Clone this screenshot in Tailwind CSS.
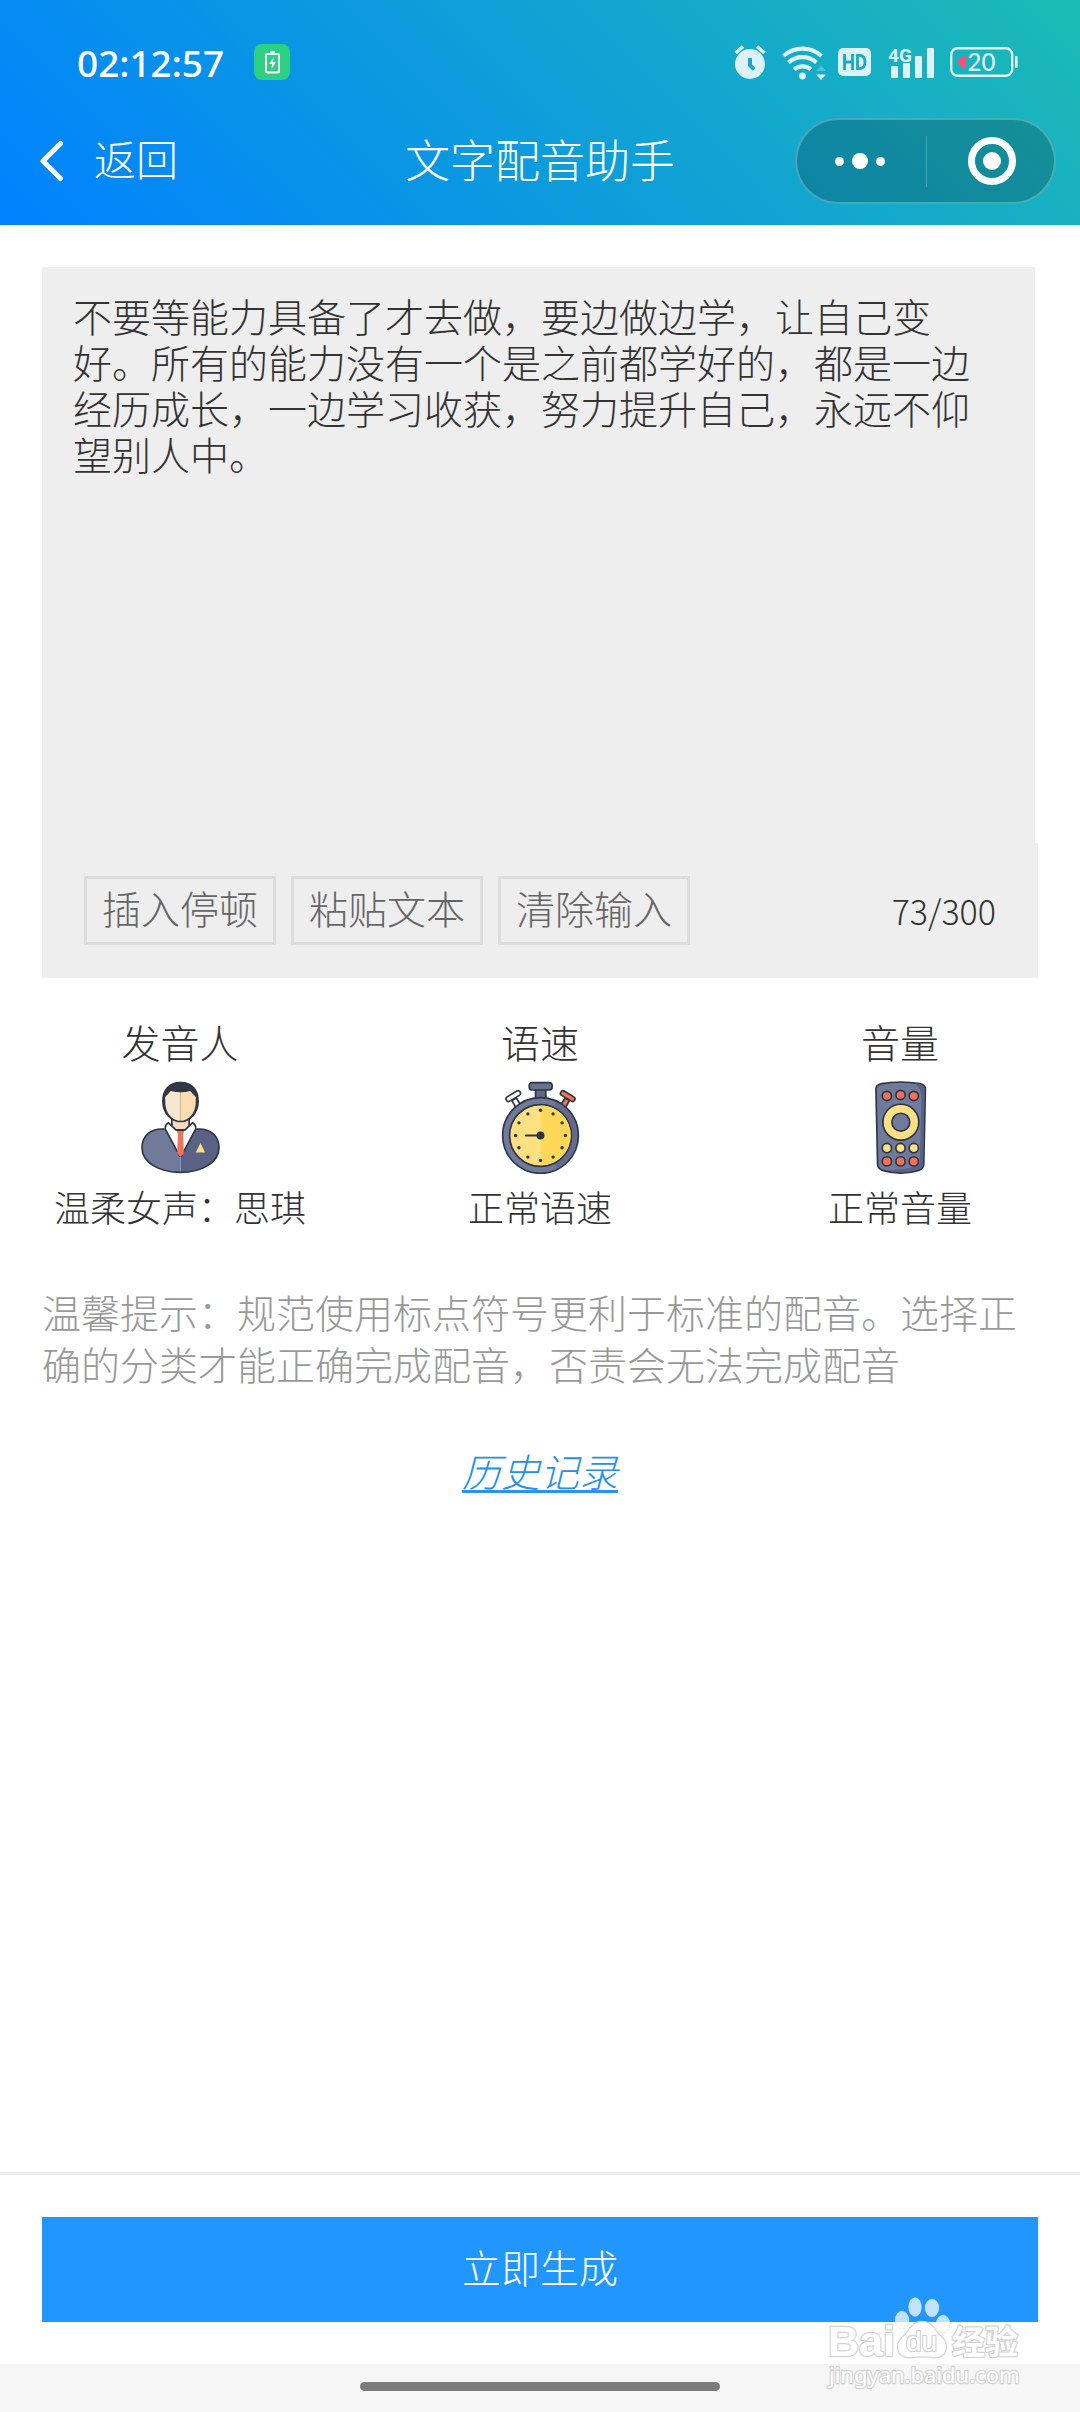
<!DOCTYPE html>
<html lang="zh-CN">
<head>
<meta charset="utf-8">
<meta name="viewport" content="width=device-width, initial-scale=1">
<title>文字配音助手</title>
<script src="https://cdn.jsdelivr.net/npm/@tailwindcss/browser@4"></script>
</head>
<body class="flex min-h-screen flex-col bg-white font-['Noto_Sans_CJK_SC',sans-serif] text-[39px] font-light text-[#333]">

<header class="bg-linear-[45deg,#0081ff,#1cbbb4] pb-[19px] text-white">
  <!-- Status bar -->
  <div class="flex h-[116px] items-center justify-between pt-2 pr-[62px] pl-[77px]">
    <div class="flex items-center gap-[30px]">
      <time class="font-['Noto_Sans',sans-serif] text-[37px] leading-none font-medium">02:12:57</time>
      <span class="flex size-9 items-center justify-center rounded-lg bg-[#2bd080]">
        <svg class="h-[23px] w-[15px]" viewBox="0 0 15 23" fill="none" aria-hidden="true">
          <path d="M5 0h5v3H5z" fill="#fff"/>
          <rect x="1" y="3" width="13" height="18.500" rx="1.500" stroke="#fff" stroke-width="2"/>
          <path d="M8.500 6.500 4.200 13h2.800l-.5 5 4.300-6.800H8z" fill="#fff"/>
        </svg>
      </span>
    </div>
    <div class="flex items-center text-white/85">
      <svg class="mr-4 h-[34px] w-8" viewBox="0 0 32 34" fill="currentColor" aria-hidden="true">
        <path fill-rule="evenodd" d="M16 4a15 15 0 1 0 0 30 15 15 0 0 0 0-30Zm-2 9h4v6.500l3.500 3.500-2.800 2.800L14 21Z"/>
        <path d="M1.500 8 9 1.500M30.500 8 23 1.500" stroke="currentColor" stroke-width="3.600"/>
      </svg>
      <svg class="mr-3 h-[35px] w-11" viewBox="0 0 44 35" fill="none" stroke="currentColor" stroke-width="4.200" aria-hidden="true">
        <path d="M1.500 11a28 28 0 0 1 38 0M6.500 17.500a21 21 0 0 1 28 0M12 24.500a13 13 0 0 1 17 0"/>
        <circle cx="20.500" cy="31" r="3.400" fill="currentColor" stroke="none"/>
        <path d="M39 20.500 44 26H34z" fill="currentColor" stroke="none" opacity=".3"/>
        <path d="M34 29.500h10L39 35z" fill="currentColor" stroke="none"/>
      </svg>
      <svg class="mr-[17px] h-7 w-[33px]" viewBox="0 0 33 28" aria-hidden="true">
        <rect width="33" height="28" rx="5" fill="currentColor"/>
        <path d="M6.500 6v16M14.500 6v16M6.500 14h8M19.500 7.300v13.400h2.500q5-.7 5-6.700t-5-6.700z" fill="none" stroke="#18a9c5" stroke-width="2.800"/>
      </svg>
      <svg class="mr-4 h-[41px] w-[46px]" viewBox="0 0 46 41" fill="currentColor" aria-label="4G">
        <text x="0" y="20" class="font-['Roboto',sans-serif] text-[19px] font-bold">4G</text>
        <rect x="3" y="24" width="7" height="12" rx="1"/>
        <rect x="15" y="21" width="7" height="15" rx="1"/>
        <rect x="27" y="14" width="7" height="22" rx="1"/>
        <rect x="39" y="6" width="7" height="30" rx="1"/>
      </svg>
      <svg class="h-[30px] w-[68px]" viewBox="0 0 68 30" fill="currentColor" aria-label="20%">
        <rect x="1.200" y="1.200" width="61" height="27.600" rx="6.500" fill="none" stroke="currentColor" stroke-width="2.400"/>
        <rect x="65" y="9" width="2.600" height="12" rx="1"/>
        <path d="M16 8.500v13q-5-1-9-6.500 4-5.500 9-6.500Z" fill="#fb4f75"/>
        <text x="17.500" y="24" class="font-['Lato',sans-serif] text-[24px] font-medium">20</text>
      </svg>
    </div>
  </div>

  <!-- Navigation bar -->
  <nav class="grid h-[90px] grid-cols-[1fr_auto_1fr] items-center px-6">
    <a href="#" class="flex items-center gap-[30px] pl-4 text-[42px] leading-none">
      <svg class="h-[42px] w-6" viewBox="0 0 24 42" fill="none" stroke="currentColor" stroke-width="5" stroke-linecap="round" stroke-linejoin="round" aria-hidden="true"><path d="M20.500 3.500 3 21l17.500 17.500"/></svg>
      <span class="pb-1.5">返回</span>
    </a>
    <h1 class="pb-1.5 text-[45px] leading-none">文字配音助手</h1>
    <div class="flex h-[86px] w-[261px] items-center justify-self-end rounded-full border-2 border-white/25 bg-black/20">
      <button type="button" aria-label="更多" class="flex h-full w-1/2 items-center justify-center gap-2 pr-0.5">
        <span class="size-[9px] rounded-full bg-white"></span>
        <span class="size-4 rounded-full bg-white"></span>
        <span class="size-[9px] rounded-full bg-white"></span>
      </button>
      <span class="h-[51px] w-px bg-white/25"></span>
      <button type="button" aria-label="关闭" class="flex h-full flex-1 items-center justify-center pl-1">
        <span class="flex size-12 items-center justify-center rounded-full border-7 border-white">
          <span class="size-[18px] rounded-full bg-white"></span>
        </span>
      </button>
    </div>
  </nav>
</header>

<main class="flex-1 px-[42px] pt-[42px]">
  <!-- Text entry -->
  <div class="pr-[3px]">
    <textarea aria-label="配音文本" maxlength="300" class="block h-[576px] w-full resize-none overflow-hidden bg-[#eee] px-[31px] pt-[25px] leading-[46px] outline-none">不要等能力具备了才去做，要边做边学，让自己变好。所有的能力没有一个是之前都学好的，都是一边经历成长，一边学习收获，努力提升自己，永远不仰望别人中。</textarea>
  </div>
  <div class="flex items-center gap-[15px] bg-[#eee] px-[42px] py-[33px]">
    <button type="button" class="h-[69px] border-3 border-[#ddd] px-[15px] pb-1.5 leading-none text-[#666]">插入停顿</button>
    <button type="button" class="h-[69px] border-3 border-[#ddd] px-[15px] pb-1.5 leading-none text-[#666]">粘贴文本</button>
    <button type="button" class="h-[69px] border-3 border-[#ddd] px-[15px] pb-1.5 leading-none text-[#666]">清除输入</button>
    <output class="ml-auto text-[34px] leading-none">73/300</output>
  </div>

  <!-- Voice settings -->
  <div class="-mx-[42px] grid grid-cols-3 pt-[43px]">
    <button type="button" class="flex flex-col items-center">
      <span class="leading-[40px]">发音人</span>
      <svg class="mt-[20px] mb-[12px] size-[93px]" viewBox="400 244 280 280" stroke="#2e3542" stroke-width="5" stroke-linejoin="round" aria-hidden="true">
        <path d="M540 390h42c46-8 74 20 74 55 0 45-52 74-116 74z" fill="#596185" stroke="none"/>
        <path d="M540 390h-42c-46-8-74 20-74 55 0 45 52 74 116 74z" fill="#707a9b" stroke="none"/>
        <path d="M492 389c-42-4-68 22-68 56 0 45 52 74 116 74s116-29 116-74c0-34-26-60-68-56" fill="none"/>
        <path d="M514 355h52v36h-52z" fill="#f5dcc0"/>
        <path d="M504 370c-8 3-10 10-10 18l43 81q3 4 6 0l43-81c0-8-2-15-10-18l-23 22h-26z" fill="#fff"/>
        <path d="M528 392h24l-4 12 2 58-10 10-10-10 2-58z" fill="#f3705a" stroke="none"/>
        <path d="M528 392h24" fill="none"/>
        <path d="M540 249c-37 0-53 25-53 56 0 35 24 61 53 61s53-26 53-61c0-31-16-56-53-56z" fill="#333745"/>
        <path d="M540 278q-15 0-29-4l-17 18v14c0 33 19 58 46 58z" fill="#f7e6d2" stroke="none"/>
        <path d="M540 278q15 0 29-4l17 18v14c0 33-19 58-46 58z" fill="#ffdcb0" stroke="none"/>
        <path d="m600 431 14 28h-28z" fill="#fbdc80" stroke="none"/>
      </svg>
      <span class="text-[36px] leading-[40px]">温柔女声：思琪</span>
    </button>
    <button type="button" class="flex flex-col items-center">
      <span class="leading-[40px]">语速</span>
      <svg class="mt-[20px] mb-[12px] size-[93px]" viewBox="280 244 280 280" stroke="#2e3542" stroke-width="5" stroke-linejoin="round" aria-hidden="true">
        <path d="m334 303 13-8 14 22-14 9z" fill="#fff"/>
        <rect x="314" y="282" width="48" height="15" rx="7" transform="rotate(-31 338 289.500)" fill="#fff"/>
        <path d="m507 303-13-8-14 22 14 9z" fill="#f3705a"/>
        <rect x="478" y="282" width="48" height="15" rx="7" transform="rotate(31 502 289.500)" fill="#f3705a"/>
        <path d="M405 268h31v30h-31z" fill="#5f688b"/>
        <rect x="386" y="249" width="69" height="22" rx="9" fill="#697294"/>
        <circle cx="420" cy="408" r="114" fill="#707a9b"/>
        <path d="M465 309a108 108 0 0 1 0 198z" fill="#626b8e" stroke="none"/>
        <circle cx="420" cy="408" r="93" fill="#fde083"/>
        <path d="M421 318a90 90 0 0 1 0 180z" fill="#ffd85a" stroke="none"/>
        <path d="M376 408h44" stroke-width="6" stroke-linecap="round"/>
        <g fill="#2e3542" stroke="none">
          <circle cx="420" cy="408" r="12"/>
          <circle cx="420" cy="332" r="5"/><circle cx="458" cy="343" r="5"/><circle cx="485" cy="370" r="5"/>
          <circle cx="495" cy="408" r="5"/><circle cx="485" cy="445" r="5"/><circle cx="458" cy="473" r="5"/>
          <circle cx="420" cy="483" r="5"/><circle cx="382" cy="473" r="5"/><circle cx="355" cy="445" r="5"/>
          <circle cx="345" cy="408" r="5"/><circle cx="355" cy="370" r="5"/><circle cx="382" cy="343" r="5"/>
        </g>
      </svg>
      <span class="text-[36px] leading-[40px]">正常语速</span>
    </button>
    <button type="button" class="flex flex-col items-center">
      <span class="leading-[40px]">音量</span>
      <svg class="mt-[20px] mb-[12px] size-[93px]" viewBox="220 246 280 280" stroke="#2e3542" stroke-width="5" stroke-linejoin="round" aria-hidden="true">
        <path d="M303 254q57-10 115 0 17 4 17 16l-5 227q-1 13-15 18-55 17-109 0-14-5-15-18l-5-227q0-12 17-16z" fill="#707a9b"/>
        <path d="M403 253q25 2 30 15l-5 229q-1 12-14 16-48 14-100 2 92-2 104-22l5-192q-1-34-20-48z" fill="#596185" stroke="none"/>
        <circle cx="361" cy="370" r="54" fill="#fde083"/>
        <circle cx="361" cy="370" r="27" fill="#707a9b"/>
        <g fill="#f3705a">
          <circle cx="319" cy="291" r="14"/><circle cx="360" cy="288" r="14"/><circle cx="400" cy="291" r="14"/>
          <circle cx="319" cy="488" r="14"/><circle cx="360" cy="488" r="14"/><circle cx="400" cy="488" r="14"/>
        </g>
        <g fill="#fde083">
          <circle cx="319" cy="448" r="14"/><circle cx="360" cy="448" r="14"/><circle cx="400" cy="448" r="14"/>
        </g>
      </svg>
      <span class="text-[36px] leading-[40px]">正常音量</span>
    </button>
  </div>

  <p class="mt-[59px] leading-[52px] text-[#999]">温馨提示：规范使用标点符号更利于标准的配音。选择正确的分类才能正确完成配音，否责会无法完成配音</p>

  <div class="mt-[63px] flex justify-center">
    <a href="#" class="border-b-3 border-[#2b93e8] pb-0.5 leading-[36px] text-[#2490e8] italic">历史记录</a>
  </div>
</main>

<footer class="relative">
  <div class="border-t-3 border-[#eee] p-[42px]">
    <button type="button" class="block h-[105px] w-full bg-[#2196ff] pb-1.5 leading-none text-white">立即生成</button>
  </div>
  <div class="flex h-12 justify-center bg-[#f6f6f6] pt-[18px]">
    <div class="h-[9px] w-1/3 rounded-full bg-[#7b7b7b]"></div>
  </div>

  <!-- Site watermark -->
  <svg class="pointer-events-none absolute right-[52px] bottom-[18px] h-[102px] w-[204px]" viewBox="0 0 204 102" fill="#fff" stroke="#d4d4d4" stroke-width="2.500" paint-order="stroke" stroke-linejoin="round" aria-label="Baidu 经验">
    <g fill-opacity=".72" stroke="#9cc4e8" stroke-opacity=".4" stroke-width="1">
      <ellipse cx="78" cy="28" rx="7" ry="9"/>
      <ellipse cx="91" cy="15" rx="6.500" ry="9.500"/>
      <ellipse cx="108" cy="16" rx="7" ry="9"/>
      <ellipse cx="119" cy="32" rx="7" ry="9"/>
    </g>
    <path d="M98 30c9 0 12 7 16 12 4 4 8 7 8 13 0 8-7 11-13 10-7-1-14-1-21 0-7 1-14-2-14-10 0-6 4-9 8-13 4-5 7-12 16-12Z"/>
    <text x="4" y="64" class="font-['Liberation_Sans',sans-serif] text-[43px] font-bold">Bai</text>
    <text x="82" y="59" class="font-['Liberation_Sans',sans-serif] text-[28px]">du</text>
    <text x="128" y="62" class="font-['Noto_Sans_CJK_SC',sans-serif] text-[33px] font-bold">经验</text>
    <text x="5" y="91" class="font-['Noto_Sans',sans-serif] text-[22px] font-normal">jingyan.baidu.com</text>
  </svg>
</footer>

</body>
</html>
